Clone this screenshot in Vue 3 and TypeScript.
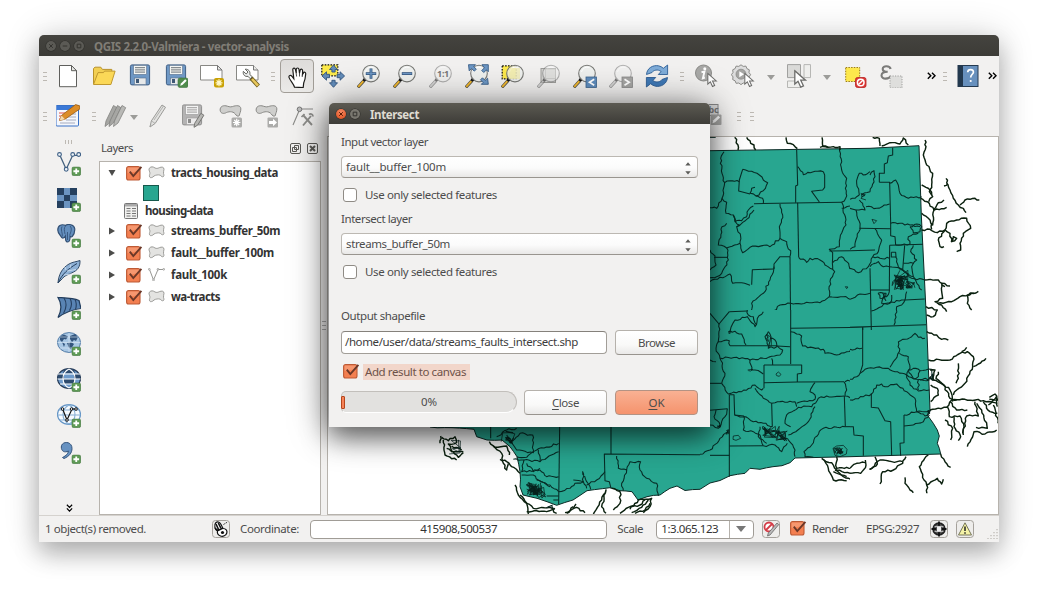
<script setup lang="ts">
interface Tool { icon?: string; kind: 'tool' | 'grip' | 'menu' | 'more' | 'gap'; w: number; on?: boolean; text?: string }
const t = (icon: string, w = 36, on = false, text = ''): Tool => ({ icon, kind: 'tool', w, on, text })
const s = (kind: Tool['kind'], w: number): Tool => ({ kind, w })

const mainTools: Tool[] = [
  s('grip', 11), t('new'), t('open'), t('save'), t('saveas'), t('composer'), t('manager'), s('grip', 14),
  t('hand', 34, true), s('gap', 1), t('pansel'), t('zoomin'), t('zoomout'), t('zoomone', 36, false, '1:1'), t('zoomfull'), t('zoomsel'),
  t('zoomlayer'), t('zoomlast'), t('zoomnext'), t('refresh'), s('grip', 14), t('identify'), t('action'),
  s('menu', 20), t('select'), s('menu', 20), t('deselect'), t('epsilon'), s('gap', 10), s('more', 24),
  s('grip', 4), s('gap', 3), t('help'), s('gap', 1), s('more', 10),
]
const editTools: Tool[] = [
  s('grip', 11), t('editor'), s('grip', 16), t('pencils', 26), s('menu', 12), t('pencil', 36), t('saveedit'),
  s('gap', 1), t('addfeat'), t('movefeat'), t('node'), s('gap', 375), t('label', 36, false, 'abc'), s('grip', 14), s('grip', 12),
]
const sideTools = ['addvector', 'addraster', 'addpg', 'addlite', 'addms', 'addwms', 'addwcs', 'addwfs', 'addcsv']

const layers = [
  { name: 'streams_buffer_50m', w: 109, icon: 'poly' },
  { name: 'fault__buffer_100m', w: 103, icon: 'poly' },
  { name: 'fault_100k', w: 56, icon: 'line' },
  { name: 'wa-tracts', w: 49, icon: 'poly' },
]

// Spreads letters so that a label takes a fixed advance width.
const vFit = {
  mounted(el: HTMLElement, b: { value: number }) {
    const n = (el.textContent || '').length
    el.style.letterSpacing = (b.value - el.getBoundingClientRect().width) / n + 'px'
  },
}

let seed = 7
const rnd = () => { seed = (seed * 16807) % 2147483647; return seed / 2147483647 - 0.5 }
const parse = (p: string) => p.trim().split(/\s+/).map(q => q.split(',').map(Number))
// Gives a polyline the small irregularities of a surveyed river or tract boundary.
function wiggle(p: string, amp = 6): string {
  const pts = parse(p)
  const out: number[][] = [pts[0]]
  for (let i = 1; i < pts.length; i++) {
    const [x0, y0] = pts[i - 1]
    const [x1, y1] = pts[i]
    const len = Math.hypot(x1 - x0, y1 - y0)
    const n = Math.max(1, Math.round(len / 8))
    for (let k = 1; k < n; k++) {
      const d = rnd() * amp
      out.push([x0 + ((x1 - x0) * k) / n - ((y1 - y0) / len) * d, y0 + ((y1 - y0) * k) / n + ((x1 - x0) / len) * d])
    }
    out.push([x1, y1])
  }
  return out.map(q => q[0].toFixed(1) + ',' + q[1].toFixed(1)).join(' ')
}
function town(cx: number, cy: number, rx: number, ry: number, n: number): string {
  const out: string[] = []
  for (let i = 0; i < n; i++) out.push((cx + rnd() * 2 * rx).toFixed(1) + ',' + (cy + rnd() * 2 * ry).toFixed(1))
  return out.join(' ')
}

// A map sheet: its origin, its clip box (x, y, width, height in sheet units) and its linework.
interface Sheet { x: number; y: number; clip: number[]; straight: string[]; bends: string[]; streams: string[]; towns: string[] }
const raw: Sheet[] = [
  {
    x: 700, y: 130, clip: [0, 0, 450, 540],
    straight: ['290,60 293,165 287,168 287,218', '293,218 296,382', '162,221 425,217', '388,363 510,362', '270,380 272,600',
      '155,464 157,419 221,417', '222,417 222,402 240,380 270,380',
      '370,125 374,135 374,172 368,180 335,184 358,216', '128,118 118,150 116,183 150,192', '42,382 82,382', '0,22 47,22'],
    bends: ['72,65 62,85 66,130 74,158 66,205 50,235 30,233', '74,158 90,152 118,155', '128,118 155,124 178,135 190,150 203,158 190,182 168,198 150,190 155,175 165,172',
      '66,205 80,217 78,250 100,255 105,275 125,272 140,260 145,240 160,228', '168,198 188,205 190,220', '100,255 108,278 118,285 110,290 122,320 120,340 80,354 55,345 66,290 80,280',
      '110,290 140,268 162,240', '120,340 128,368 150,352 192,346 210,350 240,325 260,335 272,370 270,380', '240,222 248,255 238,290 240,325',
      '80,354 85,390 65,430 50,440 30,443', '30,455 90,432 98,460 125,458 150,466', '222,410 210,450 190,490 155,520 154,543',
      '154,543 180,556 192,545 215,548 240,525 272,520 360,518 388,500 430,500 450,508', '30,360 45,378 48,405 30,420', '293,110 310,134 345,124 370,125',
      '418,55 425,120 440,145 437,205 425,217 438,285 420,325 418,350 388,358 398,368 398,418', '425,235 450,228',
      '296,382 320,397 330,385 360,390 375,405 398,418 404,425 390,455 388,500', '398,398 425,380 440,395 455,420'],
    streams: ['104,22 114,45 114,60', '140,22 152,40 162,45 167,60', '258,22 262,40 280,44 292,56', '366,22 368,48 400,50 420,50 420,60', '360,52 385,52'],
    towns: ['436,470 444,471 440,476 436,470'],
  },
  {
    x: 850, y: 130, clip: [0, 0, 445, 600],
    straight: ['88,157 119,157 122,280 122,317 135,320 137,345', '119,346 219,343', '119,346 118,485', '60,415 64,600', '0,362 75,360',
      '128,53 128,75 115,78 112,98 103,102 103,130 88,130 88,157', '124,367 137,367 138,381 124,381 124,367', '60,480 118,480', '165,510 224,507',
      '0,592 228,584', '38,592 38,600', '28,295 122,296', '164,346 158,420'],
    bends: ['0,235 18,240 45,240 38,220 28,210', '28,195 20,160 28,130 40,135 60,125', '28,195 15,205 0,208', '60,135 72,122 75,140 60,185 35,195',
      '48,230 80,235 119,222', '18,240 30,290 15,350 0,358', '75,296 95,330 85,365 68,380 55,410 25,428 0,415', '68,380 90,385 118,385',
      '119,160 137,150 150,190 175,205 215,200', '122,280 150,280 180,285 210,290', '180,290 200,282 215,290 210,305 190,308 180,290', '137,345 180,342 175,320 205,310',
      '190,346 182,365 200,390 185,410 190,440', '0,508 30,492 60,490', '64,543 110,520 155,510 165,510', '165,510 155,525 140,530 132,585', '60,410 85,395 100,410 118,410',
      '84,490 108,490 95,520 120,520 125,495', '137,380 145,410 158,420', '118,485 110,500 90,505 84,490', '160,400 190,400', '155,420 190,440 215,480', '170,485 165,510', '118,410 150,415 185,445 225,450'],
    streams: ['68,22 88,25 90,48', '95,48 120,38 150,42 160,24 175,45', '225,30 228,50 220,75 230,105 248,130 245,165 238,185 248,200 236,215', '215,165 240,180 245,195',
      '212,205 238,220 252,240 290,232', '252,240 248,285 235,265 215,250', '250,240 265,218 282,210', '288,145 294,165 300,180 310,205 325,225 340,235 348,248', '330,225 345,210 375,205 388,210', '282,168 294,162',
      '215,300 240,298 262,308 285,300 290,280 320,270 350,265 362,295 340,310 330,340 332,360 320,365', '285,300 265,330 270,350 282,350', '285,300 300,310 305,335 320,325 310,320 303,335', '245,280 245,298',
      '225,450 265,450 275,460 300,468', '275,460 278,505 255,515 275,525 290,545', '275,465 285,470', '262,520 305,515 330,500 385,484', '372,490 352,495 352,520 365,540', '228,530 262,540 250,560 230,555'],
    towns: [town(148, 460, 15, 23, 48), town(183, 464, 15, 11, 20), town(150, 445, 30, 26, 18), town(100, 500, 14, 14, 6), '66,268 80,272 72,281 66,268', '32,190 46,194 36,201 34,192', '36,192 44,197 38,198 33,205 48,210'],
  },
  {
    x: 700, y: 310, clip: [0, 0, 450, 600],
    straight: ['272,0 272,162', '272,55 486,52', '192,165 305,165 305,190 292,192 292,216', '192,165 192,235', '192,218 292,216 432,215', '88,254 88,500', '88,254 102,254 104,315 132,318',
      '30,220 64,220', '30,436 88,436', '88,408 190,407', '433,258 436,350', '30,301 82,296', '90,107 232,107', '436,350 462,350', '232,108 270,110', '215,280 217,350', '88,5 142,3', '30,10 57,42 88,5'],
    bends: ['57,42 55,95 88,92 90,107', '55,95 48,115 60,145 75,190 65,220 85,252 125,245 165,225 185,240 190,235', '60,145 110,142 150,150 190,145 240,135 248,120 232,108', '88,68 105,30 142,20 165,50 172,25 190,5',
      '90,62 125,72 138,105', '142,0 145,15 160,20 170,45', '205,65 195,80 205,115 230,110 225,90 210,85', '205,65 213,80 208,110', '272,65 290,72 305,78 308,108 370,118 375,130 410,135 440,125 486,115', '150,150 155,180 165,180 190,192',
      '215,145 218,165', '165,235 190,265 215,280 225,278 285,275 290,290', '290,280 345,268 345,255 330,245 345,218', '432,215 440,240 435,258 470,270', '435,215 460,210',
      '272,350 255,340 260,315 295,292 335,290 355,265 380,258 433,258',
      '345,290 325,335 300,355 265,375', '436,350 370,355 345,382 335,405 312,425 315,440 340,442', '104,315 145,325 160,335 190,340 217,350', '132,318 130,360 160,365 180,375 190,407', '30,345 55,355 65,335 75,320 82,296', '0,433 30,420 60,385 85,365', '190,407 225,405 245,425 262,400', '262,385 285,420 285,440', '30,150 48,155', '48,300 42,320 60,345 52,352', '180,350 175,380 200,400'],
    streams: ['365,445 378,460 385,475 400,510 440,512', '372,450 395,458 410,480 450,490', '410,440 410,475 440,472 455,475', '405,480 430,500 460,508', '400,485 440,500'],
    towns: [town(212, 366, 28, 18, 30), town(240, 377, 22, 16, 32), town(416, 424, 15, 11, 20), '399,415 410,408 430,406 441,418 439,432 420,440 405,436 399,415', '100,378 115,376 122,385 108,391 99,388 100,378', '228,192 235,186 243,193 238,199 230,197 228,192', town(55, 350, 8, 6, 8), town(82, 366, 4, 8, 8), town(206, 92, 9, 20, 7), '143,180 158,178 152,183 145,182', '84,65 92,64 90,71 84,68'],
  },
  {
    x: 850, y: 310, clip: [0, 50, 445, 500],
    straight: ['38,52 38,165 30,190', '0,52 228,44', '64,250 64,292 85,294 105,332 122,335 125,437', '162,315 162,398 150,400 152,437', '0,350 10,350 12,375 40,378 40,437', '162,348 190,345'],
    bends: ['30,190 45,178 80,172 115,175 135,185 170,195 200,208 238,210', '145,95 165,88 185,80 195,70 205,82 225,85', '145,95 148,125 130,155 120,172', '148,130 175,140 180,175 170,195', '0,270 40,260 65,252 80,225 95,222 105,230 140,222 170,245 195,265 200,305', '170,195 180,225 205,243 238,240',
      '175,180 190,175 210,182 205,200 190,205 175,180', '210,182 245,178 250,205 210,210', '200,305 238,303', '162,315 200,305 225,318 240,308', '190,345 220,335 225,325 238,315', '0,118 36,115', '0,208 20,200 30,190', '205,210 205,240'],
    streams: ['230,65 260,75 275,88 295,90', '235,150 300,150 330,130 352,125 370,140 368,170 345,220 320,240 310,255', '370,170 385,162 408,145', '335,125 350,112', '325,160 325,205 318,220', '240,180 255,180 250,210 240,200', '250,210 280,225 300,265 320,270', '242,225 262,235 265,255 242,275', '265,185 258,205 300,240 308,275',
      '240,300 290,292 305,270 345,268 400,272 442,280', '300,275 320,300 352,300', '375,275 385,318 350,318 338,370', '380,280 395,300 412,355 378,352', '400,275 420,305 442,310', '415,285 440,260 442,290', '352,410 372,365 405,372 440,360', '292,290 298,320 330,318 342,350 340,375', '285,330 308,355 302,390', '312,320 312,350 332,380 325,392', '418,262 435,252 444,270 418,268',
      '235,435 208,470 222,510 230,525 235,580 230,595', '230,525 262,505 275,522 280,508', '165,502 165,520 180,540 190,548', '272,432 285,455 302,472', '168,440 158,460 130,480 98,485 90,522', '58,478 82,462 75,440', '60,478 90,450 125,455 158,455', '430,285 444,340', '0,490 32,490 48,465 46,450', '0,475 20,460 45,458'],
    towns: [town(244, 200, 8, 12, 12), town(238, 306, 4, 6, 10)],
  },
  {
    x: 320, y: 420, clip: [0, 0, 1140, 300],
    straight: ['719,20 716,252', '873,20 873,102', '1200,106 1130,104 853,102 855,182 868,185', '868,185 873,205', '512,20 512,55', '700,240 716,240', '680,228 716,228'],
    bends: ['560,45 580,75 590,90 640,98 638,45 600,40', '590,110 620,112 650,90 716,70', '580,118 612,120 660,125 716,95', '612,120 605,155 660,150 680,170 716,170', '620,130 640,155 660,145', '605,165 640,165 655,180 690,195 716,215', '716,215 750,205 765,190 790,185', '800,195 830,180 855,155', '760,180 790,185 788,155 800,185 812,208', '790,185 800,205', '890,108 895,145 920,150 930,125 962,125 960,150 980,175 1010,190 1015,228', '920,150 905,190 910,212', '650,180 690,200', '655,90 660,125', '530,50 560,30 590,25', '600,40 570,70'],
    streams: ['362,48 360,70', '370,60 375,105 410,120', '365,52 385,62 405,50 410,68 385,72 395,95 430,95', '380,85 400,95 415,112 430,98', '395,78 425,90', '508,65 525,82 560,78 568,105', '520,78 545,100 550,130 560,150 565,130', '540,118 560,125 575,140 600,160', '585,195 595,225 620,250 625,282', '600,225 640,265 690,262 710,280', '620,275 680,275 705,265',
      '820,282 845,240 858,210 845,260 858,280', '760,260 740,280', '735,278 770,262 795,278', '875,205 900,215 900,250 880,270', '930,268 955,240 995,235 990,260 970,278', '900,280 925,262 960,255 975,240', '935,278 965,262 985,240', '945,280 975,270 990,250', '760,265 768,252'],
    towns: [town(640, 208, 22, 22, 55), town(650, 215, 38, 20, 16), town(568, 58, 13, 13, 20), town(570, 50, 28, 22, 6), town(405, 85, 18, 26, 8), town(690, 262, 16, 8, 6)],
  },
]
const sheets = raw.map(r => ({
  ...r,
  bends: r.bends.map(b => wiggle(b, 6)),
  streams: r.streams.map(b => wiggle(b, 6)),
}))
const coast = wiggle('795,458 790,462.7 782,465.7 773,466.7 760,469.3 750,468.3 745,473.3 730,475.7 720,480.5 710,483 700,489.3 685,490.5 677,486 670,488.3 660,495 647,496.7 638,500 632,491.7 620,490.7 610,487.7 587,490.7 573,500 556.7,505.3 547,501.7 537,498.3 523,495 520,486.7 520,471.7 517,456.7 510,446.7 502,440 487,440 476.7,436.7 474,429.3 430,427', 1)
const stateOutline = '430,300 710,150.7 870,148.3 919,145.7 921.3,215 926.7,325 930,410 927.3,415 933.3,423.3 937.3,430 939.3,436 937.3,443.3 939.3,448.3 940.7,454 850,456.7 ' + coast
</script>

<template>
  <svg class="defs" width="0" height="0">
    <symbol id="plus" viewBox="0 0 10 10"><rect x=".4" y=".4" width="9.2" height="9.2" rx="2" fill="#5e9a55" stroke="#497c45" stroke-width=".8" /><path d="M5 2v6M2 5h6" stroke="#fff" stroke-width="1.9" /></symbol>
    <symbol id="lens" viewBox="0 0 24 24"><path d="M.8 23.4 7 16.6" stroke="#55544c" stroke-width="3.2" /><path d="M1.2 22.8 6.4 17.2" class="handle" stroke-width="1.8" /><circle cx="7.6" cy="15.8" r="1.7" class="knot" /><circle cx="14" cy="9.6" r="8.3" fill="#edf0ef" fill-opacity=".75" stroke="#777874" stroke-width="1.1" /><path d="M8.5 8a6 6 0 0 1 8-4.5" stroke="#fff" fill="none" /></symbol>
    <symbol id="disk" viewBox="0 0 24 24"><rect x="2.4" y=".9" width="19.2" height="20" rx="1.6" fill="#6f98c5" stroke="#3f5f86" /><rect x="5.6" y="1.4" width="13" height="9" fill="#f4f5f2" stroke="#59708c" stroke-width=".6" /><path d="M7 3.7h10M7 5.9h10M7 8.1h10" stroke="#5c6469" stroke-width=".9" /><rect x="6.4" y="14" width="11.6" height="6.6" fill="#e7e9ea" stroke="#59708c" stroke-width=".6" /><path d="M8 15h3v4H8z" fill="#3e5876" /></symbol>
    <symbol id="i-new" viewBox="0 0 24 24"><path d="M3.5 1.5h12l5 5.2v16H3.5z" fill="#fff" stroke="#5f5f5c" /><path d="M15.5 1.5v5.2h5z" fill="#e8e8e5" stroke="#5f5f5c" /></symbol>
    <symbol id="i-open" viewBox="0 0 24 24"><path d="M1.5 20V4.5L3 3.2h5.8l1.6 2.2h9.4V9" fill="#f2cf53" stroke="#b9922b" /><path d="M1.5 20.5 6 8.6h5.5l1-1.5h10.6l-4.2 13.4z" fill="#fbd857" stroke="#bf982f" /></symbol>
    <symbol id="i-save" viewBox="0 0 24 24"><use href="#disk" width="24" height="24" /></symbol>
    <symbol id="i-saveas" viewBox="0 0 24 24"><use href="#disk" width="24" height="24" /><rect x="14" y="14" width="10" height="9.6" rx="2" fill="#4f8c4c" stroke="#3e7340" stroke-width=".6" /><path d="m16.2 21.8.7-2.4 4.3-4.1 1.5 1.5-4.3 4.2z" fill="#fff" /></symbol>
    <symbol id="i-composer" viewBox="0 0 24 24"><path d="M.5 1.5h17l4.5 4.5v10H.5z" fill="#fff" stroke="#888884" /><path d="M17.5 1.500v4.500h4.500z" fill="#e8e8e5" stroke="#777" /><rect x="14" y="14" width="10" height="9.600" rx="2" fill="#c9a206" /><path d="M19 15.300v7M15.500 18.800h7M16.600 16.400l4.800 4.800M21.400 16.400l-4.800 4.800" stroke="#fff8c9" stroke-width="1.300" /></symbol>
    <symbol id="i-manager" viewBox="0 0 24 24"><path d="M.5 1.500h17l4.500 4.500v10H.5z" fill="#fff" stroke="#888884" /><path d="M17.500 1.500v4.500h4.500" fill="#e8e8e5" stroke="#777" /><path d="m15 14 7.400 8" stroke="#6e5d1c" stroke-width="4.200" /><path d="m16 15 6 6.600" stroke="#e8c75c" stroke-width="2.600" /><path d="M9.200 5.200 12 8l-1.800 2-2.900-2.600c-.6 3.600 1.900 5.600 4.700 4.900l2.300 2.500 2-2-2.500-2.300c.8-3.200-1.600-5.600-4.600-5.300z" fill="#eceeed" stroke="#53554f" stroke-width=".9" /></symbol>
    <symbol id="i-hand" viewBox="0 0 24 24"><path d="M9.500 23.200c-.6-3.300-4.300-6.500-5.400-9.600-.7-2.300 1.500-3 2.900-1.300l1.800 2.300-1-8.800c-.1-2 2.100-2.300 2.600-.4l.9 4-.1-3.900c.1-2 2.600-2 2.800 0l.5 3.600.6-2.800c.4-1.800 2.500-1.400 2.500.4l-.1 3.600.9-1.200c.6-1.600 2.500-1 2.300.9-.2 2.900-.6 6-2 9l-.5 4.600z" fill="#fff" stroke="#1d1d1b" stroke-width="1.200" /><path d="m11.200 9.500.4 3M14.500 9v3.500M17.500 10l-.3 3" stroke="#222" stroke-width=".8" /></symbol>
    <symbol id="i-pansel" viewBox="0 0 24 24"><rect x=".8" y=".8" width="16" height="11" fill="#fdea4b" stroke="#111" stroke-dasharray="1.600 1.300" stroke-width="1.200" /><path d="m12.500 1 4 4.500h-2.400V8h-3.200V5.500H8.500zM12.500 23.300l4-4.500h-2.400v-2.500h-3.200v2.500H8.500zM1 12l4.500-4.200v2.500h3v3.400h-3v2.500zM23.600 12l-4.500-4.200v2.500h-3v3.400h3v2.500z" fill="#638cb9" stroke="#33567f" stroke-width=".9" /></symbol>
    <symbol id="i-zoomin" viewBox="0 0 24 24"><use href="#lens" width="24" height="24" /><path d="M14 4.400v10.400M8.800 9.600h10.400" stroke="#33567f" stroke-width="2.800" /><path d="M14 5v9.200M9.400 9.600h9.200" stroke="#6d97c4" stroke-width="1.300" /></symbol>
    <symbol id="i-zoomout" viewBox="0 0 24 24"><use href="#lens" width="24" height="24" /><path d="M8.800 9.600h10.400" stroke="#33567f" stroke-width="2.800" /><path d="M9.400 9.600h9.200" stroke="#6d97c4" stroke-width="1.300" /></symbol>
    <symbol id="i-zoomone" viewBox="0 0 24 24"><use href="#lens" width="24" height="24" class="mute" /></symbol>
    <symbol id="i-zoomfull" viewBox="0 0 24 24"><use href="#lens" width="24" height="24" /><path d="M3.500.7h7L8.700 2.500l2.600 2.700-2 2-2.700-2.700-2.400 2.300zM23.300.7v7l-1.800-1.800-2.800 2.600-2-2 2.700-2.700L17 .7zM23.300 20.300h-7l1.800-1.800-2.600-2.700 2-2 2.700 2.700 2.400-2.300z" fill="#6d97c4" stroke="#3a5f89" stroke-width=".9" /></symbol>
    <symbol id="i-zoomsel" viewBox="0 0 24 24"><rect x="1.200" y="1.800" width="14" height="13" fill="#fdea4b" stroke="#111" stroke-width="1.200" stroke-dasharray="1.600 1.300" /><use href="#lens" width="24" height="24" /><path d="M8 4h11v11H8z" fill="#f3eda5" opacity=".6" /></symbol>
    <symbol id="i-zoomlayer" viewBox="0 0 24 24"><rect x="4" y="4.500" width="14.500" height="14" fill="#d5d5d3" stroke="#9d9d9a" /><use href="#lens" width="24" height="24" class="mute" /><rect x="8.500" y="5" width="10" height="9.500" fill="#e0e0de" stroke="#c5c5c3" stroke-width=".7" /></symbol>
    <symbol id="i-zoomlast" viewBox="0 0 24 24"><use href="#lens" width="24" height="24" /><rect x="13" y="13" width="10.500" height="10.500" fill="#5f8dbd" stroke="#3c638d" stroke-width=".8" /><path d="m21.200 15.300-4.700 2.900 4.700 3" fill="none" stroke="#fff" stroke-width="1.700" /></symbol>
    <symbol id="i-zoomnext" viewBox="0 0 24 24"><use href="#lens" width="24" height="24" class="mute" /><rect x="13" y="13" width="10.500" height="10.500" fill="#a6a6a4" stroke="#888" stroke-width=".8" /><path d="m15.500 15.300 4.700 2.900-4.700 3" fill="none" stroke="#fff" stroke-width="1.700" /></symbol>
    <symbol id="i-refresh" viewBox="0 0 24 24"><path d="M1.500 10.500C2 4 8 .8 13.500 1.800c2 .4 3.500 1.200 4.800 2.500L22.600 1v9.500h-9.300l2.800-3C12.800 5 8.500 6 7 8.500z" fill="#7fadd9" stroke="#2f6199" stroke-width=".9" /><path d="M22.500 13.500c-.5 6.500-6.500 9.700-12 8.700-2-.4-3.500-1.200-4.800-2.500L1.400 23v-9.500h9.300l-2.800 3c3.300 2.500 7.600 1.500 9.100-1z" fill="#3f79b6" stroke="#2d5b91" stroke-width=".9" /></symbol>
    <symbol id="cursor" viewBox="0 0 12 16"><path d="M1 1v11.300l2.700-2.400 2.300 5 2.300-1.100L6 9h4z" fill="#fff" stroke="#6d6d6b" stroke-width="1.100" /></symbol>
    <symbol id="i-identify" viewBox="0 0 24 24"><circle cx="8.500" cy="9" r="8" fill="#a8a8a6" stroke="#8c8c89" /><circle cx="9.800" cy="4.800" r="1.500" fill="#fff" /><path d="m6.500 8.200 3-.7-1.600 6.700 2-.7" fill="none" stroke="#fff" stroke-width="1.900" /><use href="#cursor" x="11.500" y="8.500" width="12" height="15" /></symbol>
    <symbol id="i-action" viewBox="0 0 24 24"><path d="m10 .8 2.200 1.600 2.700-.3 1 2.500 2.400 1.200-.3 2.700 1.600 2.200-1.600 2.200.3 2.700-2.400 1.200-1 2.500-2.700-.3-2.200 1.600-2.200-1.600-2.700.3-1-2.500-2.400-1.200.3-2.700L.4 10.700 2 8.500l-.3-2.700 2.400-1.200 1-2.500 2.700.3z" fill="#ddd" stroke="#8b8b88" /><circle cx="10" cy="10.200" r="5" fill="#a5a5a3" stroke="#858583" stroke-width=".7" /><path d="M8.300 7.200v6l4.700-3z" fill="#fff" /><use href="#cursor" x="12.500" y="8.500" width="12" height="15" /></symbol>
    <symbol id="i-select" viewBox="0 0 24 24"><path d="M.5.600h13v13H.5z" fill="#dadad8" stroke="#a1a19f" /><path d="M17 .6h6.500v13H17zM.5 17h13v6.500H.5z" fill="#efefed" stroke="#b7b7b4" /><use href="#cursor" x="6" y="5.500" width="15.500" height="19" /></symbol>
    <symbol id="i-deselect" viewBox="0 0 24 24"><rect x="2.700" y="3.500" width="14" height="14" fill="#fde84c" stroke="#9b7d16" stroke-dasharray="1.500 1.200" /><rect x="12.500" y="13.500" width="10.500" height="10" rx="2" fill="#dd3a38" stroke="#b62120" stroke-width=".8" /><circle cx="17.700" cy="18.500" r="3.300" fill="none" stroke="#fff" stroke-width="1.500" /><path d="m15.500 20.600 4.400-4.300" stroke="#fff" stroke-width="1.400" /></symbol>
    <symbol id="i-epsilon" viewBox="0 0 24 24"><path d="M11.600 5C11 1.700 3.700 1 3.700 4.900c0 2.400 2.500 2.800 5 2.800-3.500 0-6.200.9-6.200 3.900 0 4.200 8 3.700 9.200.3" fill="none" stroke="#7b7b79" stroke-width="2.100" /><rect x="11" y="12" width="12" height="12" fill="#dededc" stroke="#9e9e9c" stroke-dasharray="1.200 1.300" /></symbol>
    <symbol id="i-help" viewBox="0 0 24 24"><rect x="2" y="1.500" width="20" height="21" fill="#6790bd" stroke="#24394f" /><path d="M2 1.500h5v21H2z" fill="#22384e" /><path d="M11.700 8.200c.2-3.700 6-3.400 5.700 0-.2 2-2.600 2.300-2.700 5.300" fill="none" stroke="#fff" stroke-width="1.700" /><circle cx="14.700" cy="17" r="1.100" fill="#fff" /></symbol>
    <symbol id="i-editor" viewBox="0 0 24 24"><rect x="0" y="1.500" width="22.500" height="20.500" rx="1" fill="#f5f7fc" stroke="#3971c7" /><path d="M.5 2h21.500v4H.5z" fill="#3b79d7" /><path d="M3 9h6M3 12h5M3 15h4" stroke="#e35143" stroke-width="1.100" /><path d="M12 10h8M12 13h8M10 16h10M4 19h15" stroke="#a5abbd" stroke-width="1.100" /><path d="m3.500 16.500 2-5L19.500.6l4.200 1.200.3 3L9 15.200z" fill="#dc8d27" stroke="#9a5b10" stroke-width=".8" /><path d="m5.500 11.500 3.500 3.700-5.500 1.300z" fill="#f3d8ad" /></symbol>
    <symbol id="i-pencils" viewBox="0 0 24 24"><g fill="#a6a6a3" stroke="#82827f" stroke-width=".8"><path d="m2 22.500 1-5.500L10.500 1.500l3.500 2.200L6.500 19z" /><path d="m6 22.500 1-5.500L14.500 1.500l3.500 2.200L10.500 19z" /><path d="m10.500 22.500 1-5.500L19 1.500l3.700 2.200L15 19z" fill="#b9b9b6" /></g></symbol>
    <symbol id="i-pencil" viewBox="0 0 24 24"><path d="m4 23 1.300-6L16 1l3.500 2.300L9.200 19.400z" fill="#e3e3e1" stroke="#9a9a97" /><path d="m5.500 17 3.500 2.300M8 16 17.500 2M4 23l.7-2.500" stroke="#a5a5a2" stroke-width=".8" fill="none" /></symbol>
    <symbol id="i-saveedit" viewBox="0 0 24 24"><g class="grey"><use href="#disk" x="-2" width="24" height="24" /></g><path d="m12 23.300.7-4 6.200-10 3 1.900-6.400 10z" fill="#b7b7b4" stroke="#777774" /></symbol>
    <symbol id="blob" viewBox="0 0 24 14"><path d="M1.200 6C1 2.800 3.700.9 7.300 1.600c2.500.5 4 1.600 6.700.8C17.700 1 22.800.7 22.800 4.800c0 3-1.300 4.500-1.600 7-1.700 1.400-3.200 0-4.200-1.700-2.700-3.400-7.600-2.500-10.200-1C3.500 10.300 1.300 8.700 1.200 6z" fill="#cfcfcd" stroke="#858582" /></symbol>
    <symbol id="i-addfeat" viewBox="0 0 24 24"><use href="#blob" width="23" height="14" /><rect x="12.500" y="13.500" width="10.500" height="10" rx="1.500" fill="#acacaa" /><path d="M17.700 14.700v7.600M14 18.500h7.400M15.200 16l5 5M20.200 16l-5 5" stroke="#fff" stroke-width="1.200" /></symbol>
    <symbol id="i-movefeat" viewBox="0 0 24 24"><use href="#blob" width="23" height="14" /><rect x="12.500" y="13.500" width="10.500" height="10" rx="1" fill="#acacaa" /><path d="M14 17h4v-2.200l4 3.700-4 3.700V20h-4z" fill="#fff" /></symbol>
    <symbol id="i-node" viewBox="0 0 24 24"><path d="M2 21 8 7M9 5h13" stroke="#8a8a87" stroke-width="1.100" /><circle cx="8.500" cy="5.300" r="2.300" fill="#bbb" stroke="#777" /><path d="m12 11 9 10M20 12l-8 9.500" stroke="#8d8d8a" stroke-width="1.900" /><path d="M18 10.500c2-1.500 4 0 4 2M10.500 13l3-3" stroke="#8d8d8a" stroke-width="1.700" fill="none" /></symbol>
    <symbol id="i-label" viewBox="0 0 24 24"><rect x="-3" y=".5" width="19" height="11" fill="#ddd" stroke="#888" /><rect x="8.500" y="10.500" width="11" height="10.500" rx="1" fill="#a9a9a7" /><path d="m10.500 19.300.8-3 5-4.500 1.800 1.800-5 4.700z" fill="#fff" /></symbol>

    <symbol id="i-addvector" viewBox="0 0 24 24"><path d="M3 3.500 9.200 17.300l6.500-14h6" fill="none" stroke="#44617e" stroke-width="1.300" /><g fill="#eef3f7" stroke="#3f6086" stroke-width="1.100"><circle cx="2.500" cy="2.500" r="1.900" /><circle cx="9.200" cy="17.300" r="1.900" /><circle cx="15.700" cy="2.500" r="1.900" /><circle cx="21.700" cy="2.500" r="1.900" /></g></symbol>
    <symbol id="i-addraster" viewBox="0 0 24 24"><path d="M0 0h20v20H0z" fill="#6b94c1" /><path d="M0 0h7v7H0zM13 0h7v7h-7zM7 7h6v6H7zM0 13h7v7H0zM13 13h7v7h-7z" fill="#25405f" /></symbol>
    <symbol id="i-addpg" viewBox="0 0 24 24"><path d="M.8 6C.8.800 5 0 8.500 1.400 11-.2 17 .3 17.700 4.500c.3 3-1.300 6.700-2.500 8-1 .8-1.800 0-2.200-.7.200 3.500-.2 6-2.300 6.200-2.400 0-2.200-3.300-2.200-6-1.800 3-3.800 2.500-4.600.3C2.500 10.500.8 9 .8 6z" fill="#648fbe" stroke="#324f73" stroke-width="1.200" /><path d="M5 2.500c-1.800 3 .8 6.500.3 10M8.500 2c-2 2-1 5-.5 8M13 2c2.500 2.500.8 6-.5 9.500M10.500 8v8" fill="none" stroke="#3a5a82" /></symbol>
    <symbol id="i-addlite" viewBox="0 0 24 24"><path d="M1 23C1.500 15 5 8 12 4 16 1.700 19 2 23 .5c.3 6.500-2.500 10-8.500 12.500-4 1.700-7.500 3-9 5.500z" fill="#8eb1d6" stroke="#344d69" /><path d="M1 23C5.500 13.500 11 9 20 3.500" fill="none" stroke="#27415f" /><path d="m7 15 7-1M10 11l9-1.500M9 10l-1-3M13 8l1-3.500" stroke="#d2e1f0" stroke-width=".8" /></symbol>
    <symbol id="i-addms" viewBox="0 0 24 24"><path d="M1 1.500c8 .5 15 .5 21 3l2 8c-6 .7-14 2.500-23 9C5 14 4.500 7 1 1.500z" fill="#5984b4" stroke="#213c5c" stroke-width="1.200" /><path d="M7 2c4 6 2 11-.5 15.500M13 2.500c3 5 1.500 8.500-.5 12M18 3.500c2 3.500 1.500 6.500.5 10" fill="none" stroke="#253f60" stroke-width="1.100" /></symbol>
    <symbol id="i-addwms" viewBox="0 0 24 24"><ellipse cx="12" cy="10.500" rx="11.500" ry="9.900" fill="#a8c7e4" stroke="#537ca7" /><path d="m3 4.500 4-2 4 2-2 3-2-.5-2 3-2-2zM13 4l5-2 3 3-2 4-2-1-2 2-2-3zM10 11l4-1 3 2-3 5-2-1zM5 10l3 2-1 3z" fill="#33557d" /><path d="M.5 10.500h23M12 1v19M3 5h18M3 16h18" fill="none" stroke="#dceaf5" stroke-width=".6" /></symbol>
    <symbol id="i-addwcs" viewBox="0 0 24 24"><ellipse cx="12" cy="10.500" rx="11.500" ry="9.900" fill="#6d9acb" stroke="#263b56" stroke-width="1.200" /><path d="M7 1.800C9 .8 15 .8 17 1.800l1 3.500H6zM1 6h6v5H.7zM17 6h6v5h-6zM7 11h10v5H7z" fill="#2d4b6e" /><path d="M1 6h22M.5 11h23M3 16h18M12 1C4 5 4 16 12 20M12 1c8 4 8 15 0 19" fill="none" stroke="#fff" stroke-width="1.100" /></symbol>
    <symbol id="i-addwfs" viewBox="0 0 24 24"><ellipse cx="12" cy="10.500" rx="11.500" ry="9.900" fill="#f7fbff" stroke="#6495c6" stroke-width="1.200" /><path d="M2 6h20M.5 11h23M3 16h18M12 1C4 5 4 16 12 20M12 1c8 4 8 15 0 19" fill="none" stroke="#85aed4" stroke-width="1.100" /><path d="m6 6 4 10 5-11h4" fill="none" stroke="#111" stroke-width="1.200" /><g fill="#fff" stroke="#111"><circle cx="5.500" cy="5" r="1.300" /><circle cx="10" cy="16" r="1.300" /><circle cx="14.500" cy="5" r="1.300" /><circle cx="19" cy="5" r="1.300" /></g></symbol>
    <symbol id="i-addcsv" viewBox="0 0 24 24"><path d="M5.500 17.500c4-2 5.500-4 6-6.500-4 2-7.200.3-7.200-4C4.300 1 15 .5 15 8.500c0 4.500-3 8-8 10z" fill="#6792c1" stroke="#34547c" /></symbol>

    <symbol id="poly" viewBox="0 0 17 13"><path d="M1.300 2.300C3 .3 5 .5 7 2c1.500.8 3 .3 4.500-.4C13.500.7 16 .9 16 3.300c0 1.500-.8 2.400-.5 4 .3 1.300.8 2.200 0 3.200-1.300.8-2.400-.3-3.200-1.300C10.500 8.500 7.500 9 6 10c-1.300 1.700-3.800 2.300-4.500.8C1 9 2.300 8 1.800 6.300 1.300 4.800.6 3.300 1.300 2.300z" fill="#e3e3e1" stroke="#92928f" stroke-width=".9" /></symbol>
    <symbol id="line" viewBox="0 0 17 13"><path d="m1.500 1.500 4 10.500L10 1.500h5.500" fill="none" stroke="#8a8a86" stroke-width=".9" /><g fill="#fff" stroke="#8a8a86" stroke-width=".7"><circle cx="1.300" cy="1.300" r=".9" /><circle cx="5.500" cy="12" r=".9" /><circle cx="10" cy="1.300" r=".9" /><circle cx="15.700" cy="1.300" r=".9" /></g></symbol>
    <symbol id="check" viewBox="0 0 17 16"><rect x=".6" y="1.600" width="13.400" height="13.400" rx="2" fill="#f37f50" stroke="#bd5a35" stroke-width="1.100" /><path d="M1.600 8V2.600h11.400V6z" fill="#f9a684" opacity=".6" /><path d="m3.800 6.600 3.500 4.500L15.400 1.800" fill="none" stroke="#6b3828" stroke-width="1.900" /></symbol>
    <symbol id="more" viewBox="0 0 9 8"><path d="m.8.8 3 3-3 3M5 .8l3 3-3 3" fill="none" stroke="#000" stroke-width="1.400" /></symbol>
  </svg>

  <main class="window">
    <header class="title">
      <i class="dot"><svg viewBox="0 0 11 11"><path d="m3.500 3.500 4 4M7.500 3.500l-4 4" /></svg></i>
      <i class="dot"><svg viewBox="0 0 11 11"><path d="M3 5.500h5" /></svg></i>
      <i class="dot"><svg viewBox="0 0 11 11"><path d="M3.500 3.500h4v4h-4z" /></svg></i>
      <b v-fit="195">QGIS 2.2.0-Valmiera - vector-analysis</b>
    </header>

    <nav v-for="(bar, b) in [mainTools, editTools]" :key="b" class="bar">
      <div v-for="(x, i) in bar" :key="i" class="cell" :class="[x.kind, { on: x.on }]" :style="{ width: x.w + 'px' }">
        <svg v-if="x.kind === 'tool'" class="ic">
          <use :href="'#i-' + x.icon" width="24" height="24" />
          <text v-if="x.text" :class="'t-' + x.icon" :x="x.icon === 'label' ? 1 : 14" :y="x.icon === 'label' ? 9 : 12.800">{{ x.text }}</text>
        </svg>
        <svg v-else-if="x.kind === 'more'" class="mo"><use href="#more" width="9" height="8" /></svg>
        <i v-else-if="x.kind !== 'gap'" />
      </div>
    </nav>

    <section class="body">
      <nav class="side">
        <i class="sgrip" />
        <div v-for="n in sideTools" :key="n" class="scell">
          <svg class="ic"><use :href="'#i-' + n" width="24" height="24" /><use href="#plus" x="14.500" y="14.500" width="9.500" height="9.500" /></svg>
        </div>
        <svg class="down" viewBox="0 0 8 9"><path d="m1 .8 3 3 3-3M1 5l3 3 3-3" fill="none" stroke="#000" stroke-width="1.400" /></svg>
      </nav>

      <aside class="panel">
        <div class="phead">
          <span v-fit="32">Layers</span>
          <svg width="11" height="11" viewBox="0 0 11 11"><rect x=".5" y=".5" width="10" height="10" rx="1.500" /><path d="M4.500 2.500h4v4h-4zM2.500 4.500h4v4h-4z" /></svg>
          <svg width="11" height="11" viewBox="0 0 11 11"><rect x=".5" y=".5" width="10" height="10" rx="1.500" /><path d="m3 3 5 5M8 3 3 8" stroke-width="2" /></svg>
        </div>
        <div class="tree">
          <div class="row">
            <svg class="tri" viewBox="0 0 8 8"><path d="M.5 1h7L4 7z" /></svg>
            <svg class="ck"><use href="#check" width="17" height="16" /></svg>
            <svg class="ty"><use href="#poly" width="17" height="13" /></svg>
            <b v-fit="107">tracts_housing_data</b>
          </div>
          <div class="row swrow"><i class="swatch" /></div>
          <div class="row table">
            <svg width="15" height="16" viewBox="0 0 15 16"><rect x=".5" y=".5" width="13" height="15" rx="1" fill="#f1f1ef" stroke="#777" /><path d="M1 1h12v2.500H1z" fill="#aaa" /><path d="M2.500 5.500h4M8 5.500h4M2.500 8h4M8 8h4M2.500 10.500h4M8 10.500h4M2.500 13h4M8 13h4" stroke="#777" /></svg>
            <b v-fit="68">housing-data</b>
          </div>
          <div v-for="l in layers" :key="l.name" class="row">
            <svg class="tri" viewBox="0 0 8 8"><path d="M1 .5v7L7 4z" /></svg>
            <svg class="ck"><use href="#check" width="17" height="16" /></svg>
            <svg class="ty"><use :href="'#' + l.icon" width="17" height="13" /></svg>
            <b v-fit="l.w">{{ l.name }}</b>
          </div>
        </div>
      </aside>
      <div class="split"><i /></div>

      <svg class="map" viewBox="328 137 670 377">
        <defs>
          <clipPath v-for="(m, k) in sheets" :id="'sheet' + k" :key="k"><rect :x="m.clip[0]" :y="m.clip[1]" :width="m.clip[2]" :height="m.clip[3]" /></clipPath>
        </defs>
        <polygon :points="stateOutline" class="land" />
        <g v-for="(m, k) in sheets" :key="k" :transform="`translate(${m.x} ${m.y}) scale(.33333)`" :clip-path="`url(#sheet${k})`">
          <polyline v-for="(p, i) in m.straight" :key="'a' + i" :points="p" class="edge" />
          <polyline v-for="(p, i) in m.bends" :key="'b' + i" :points="p" class="edge" />
          <polyline v-for="(p, i) in m.streams" :key="'c' + i" :points="p" class="river" />
          <polyline v-for="(p, i) in m.towns" :key="'d' + i" :points="p" class="town" />
        </g>
      </svg>
    </section>

    <footer class="status">
      <span class="msg"><span v-fit="101">1 object(s) removed.</span></span>
      <svg class="sbtn mouse" viewBox="0 0 18 18"><rect x=".5" y=".5" width="17" height="17" rx="3" /><path d="M4 2.500c2-1.500 4 0 5 2l2 4c3 0 4.500 2 3.800 4.500S11 17 8.500 16 5 13 5.500 11C3 10 1.500 5 4 2.500z" fill="#fff" stroke="#111" stroke-width="1.200" /><path d="m4 4 2.500 5.500M6.300 3l2.500 5M3 8l3 3M6 10.500l5-2.500" stroke="#111" stroke-width="1.600" /><circle cx="10.500" cy="12.500" r="1.600" fill="#111" /><path d="m11.500 4.500 4-2.500" stroke="#222" stroke-dasharray="1.500 1" /></svg>
      <span class="lab coord"><span v-fit="59">Coordinate:</span></span>
      <div class="field pos"><span v-fit="77">415908,500537</span></div>
      <span class="lab scale"><span v-fit="26">Scale</span></span>
      <div class="combo"><div class="val"><span v-fit="57">1:3.065.123</span></div><i /></div>
      <svg class="sbtn stop" viewBox="0 0 18 18"><rect x=".5" y=".5" width="17" height="17" rx="3" /><circle cx="7" cy="7" r="4.500" fill="#fff" stroke="#d43c47" stroke-width="1.800" /><path d="m4 10 6-6" stroke="#d43c47" stroke-width="1.800" /><path d="m5.500 16 .8-3L15 3l1.800 1.500L8 15z" fill="#bbb" stroke="#666" stroke-width=".8" /></svg>
      <svg class="ck rck"><use href="#check" width="17" height="16" /></svg>
      <span class="lab render"><span v-fit="36">Render</span></span>
      <span class="lab epsg"><span v-fit="53">EPSG:2927</span></span>
      <svg class="sbtn crs" viewBox="0 0 18 18"><rect x=".5" y=".5" width="17" height="17" rx="3" /><circle cx="9" cy="9" r="5.800" fill="#666" stroke="#222" stroke-width="1.900" /><path d="M9 1.500v15M1.500 9h15" stroke="#111" stroke-width="1.800" /><path d="M6.500 6h5v6h-5z" fill="#eee" stroke="#333" stroke-width=".7" /><path d="M4.500 6.500h9M4.500 11.500h9" stroke="#ddd" stroke-width=".7" /></svg>
      <svg class="sbtn warn" viewBox="0 0 18 18"><rect x=".5" y=".5" width="17" height="17" rx="3" /><path d="M9 2.800 15.500 15h-13z" fill="#f5f3a6" stroke="#77775a" /><path d="M9 6.500v4.500M9 12.200v1.500" stroke="#222" stroke-width="1.500" /></svg>
      <svg class="corner" viewBox="0 0 12 12"><path d="M10 1v10M7 4v7M4 7v4M1 10v1" stroke="#b9b6b1" stroke-dasharray="1.200 1.800" stroke-width="1.200" /></svg>
    </footer>
  </main>

  <section class="dialog">
    <header class="title dt">
      <i class="dot red"><svg viewBox="0 0 11 11"><path d="m3.500 3.500 4 4M7.500 3.500l-4 4" /></svg></i>
      <i class="dot lit"><svg viewBox="0 0 11 11"><path d="M3.500 3.500h4v4h-4z" /></svg></i>
      <b v-fit="49">Intersect</b>
    </header>
    <div class="form">
      <label class="cap"><span v-fit="87">Input vector layer</span></label>
      <div class="pick"><span v-fit="100">fault__buffer_100m</span><svg viewBox="0 0 6 13"><path d="M.3 3.500 3 .3l2.700 3.200zM.3 9.300 3 12.500l2.700-3.200z" /></svg></div>
      <div class="opt"><i class="box" /><span v-fit="132">Use only selected features</span></div>
      <label class="cap second"><span v-fit="71">Intersect layer</span></label>
      <div class="pick"><span v-fit="104">streams_buffer_50m</span><svg viewBox="0 0 6 13"><path d="M.3 3.500 3 .3l2.700 3.200zM.3 9.300 3 12.500l2.700-3.200z" /></svg></div>
      <div class="opt"><i class="box" /><span v-fit="132">Use only selected features</span></div>
      <label class="cap third"><span v-fit="84">Output shapefile</span></label>
      <div class="line1">
        <div class="path"><span v-fit="233">/home/user/data/streams_faults_intersect.shp</span></div>
        <div class="btn"><span v-fit="37">Browse</span></div>
      </div>
      <div class="opt add"><svg class="ck"><use href="#check" width="17" height="16" /></svg><div class="hl"><span v-fit="101">Add result to canvas</span></div></div>
      <div class="line2">
        <div class="prog"><i /><span v-fit="16">0%</span></div>
        <div class="btn"><span v-fit="27"><u>C</u>lose</span></div>
        <div class="btn ok"><span v-fit="16"><u>O</u>K</span></div>
      </div>
    </div>
  </section>
</template>

<style>
html, body { margin: 0; background: #fff; overflow: hidden; }
#app { height: 592px; position: relative; overflow: hidden; }
</style>

<style scoped>
.defs { position: absolute; }
svg { display: block; flex: none; overflow: visible; }
.handle { stroke: #f4b92c; }
.knot { fill: #111; }
.mute { opacity: .55; filter: grayscale(1); }
.grey { filter: grayscale(1); opacity: .65; }
.t-zoomone { font: bold 9px "Noto Sans", sans-serif; text-anchor: middle; fill: #777; letter-spacing: -.3px; }
.t-label { font: bold 9px "Noto Sans", sans-serif; fill: #777; }
.window {
  position: relative; width: 960px; height: 507px; margin: 35px 0 0 39px; display: flex; flex-direction: column;
  border-radius: 5px 5px 0 0; background: #f2f1f0; color: #4c4c4c; font: 11.5px/16px "Noto Sans", sans-serif; white-space: nowrap;
  box-shadow: 0 0 36px rgba(0, 0, 0, .16), 0 12px 24px rgba(0, 0, 0, .26);
}
b, span { flex: none; }
.title { display: flex; align-items: center; height: 21px; flex: none; padding-left: 7px; border-radius: 5px 5px 0 0; background: linear-gradient(#45443f, #3c3b37); color: #807d76; }
.title b { margin-left: 4px; padding-top: 2px; }
.dot { width: 10px; height: 10px; margin-right: 4px; border-radius: 50%; background: #5b5a55; box-shadow: 0 0 0 .5px #2e2d2a; }
.dot:nth-child(3) { margin-right: 6px; }
.dot svg { width: 10px; height: 10px; fill: none; stroke: #34332f; stroke-width: 1.100; }
.dt { background: linear-gradient(#5c5a52, #3d3c38); color: #dfdbd2; }
.dot.red { background: radial-gradient(circle at 50% 30%, #f58a65, #dd4814); }
.dot.red svg { stroke: #5c1b05; }
.dot.lit { background: #79776f; }
.dt b { margin-left: 6px; }
.bar { display: flex; height: 40px; flex: none; align-items: center; }
.cell { display: flex; align-items: center; justify-content: center; height: 34px; flex: none; }
.on { box-sizing: border-box; border: 1px solid #a29e98; border-radius: 4px; background: linear-gradient(#dedcda, #ebeae8); }
.ic { width: 24px; height: 24px; }
.mo { width: 9px; height: 8px; }
.grip i { width: 4px; height: 9px; background: repeating-linear-gradient(#bdb9b3 0 1px, transparent 1px 4px); }
.menu i { margin-top: 2px; border: 4px solid transparent; border-top: 5px solid #9c9c99; border-bottom: 0; }
.body { display: flex; height: 379px; flex: none; }
.side { width: 60px; display: flex; flex-direction: column; align-items: center; }
.sgrip { width: 8px; height: 4px; margin: 4px 0 4px; background: repeating-linear-gradient(90deg, #bdb9b3 0 1px, transparent 1px 3px); }
.scell { height: 36px; padding-top: 4px; box-sizing: border-box; }
.down { width: 7px; height: 8px; margin-top: 32px; }
.panel { width: 222px; display: flex; flex-direction: column; }
.phead { height: 25px; display: flex; align-items: center; padding: 0 3px 1px 2px; box-sizing: border-box; gap: 6px; }
.phead span { margin-right: auto; }
.phead svg { fill: none; stroke: #5a5955; stroke-width: 1; }
.tree { flex: 1; box-sizing: border-box; border: 1px solid #b7b3ad; background: #fff; color: #333; }
.row { display: flex; align-items: center; height: 22px; padding-left: 8px; }
.tri { width: 8px; height: 8px; fill: #4c4c4a; margin-right: 10px; }
.ck { width: 17px; height: 16px; margin-right: 5px; }
.ty { width: 17px; height: 13px; margin: 0 6px 2px 0; }
.swrow { height: 18px; padding-left: 43px; }
.swatch { width: 14px; height: 14px; border: 1px solid #15594c; background: #28a690; }
.table { height: 18px; padding-left: 24px; gap: 6px; }
.split { width: 6px; display: flex; align-items: center; justify-content: center; }
.split i { width: 4px; height: 9px; background: repeating-linear-gradient(#aaa 0 1px, transparent 1px 4px); }
.map { box-sizing: border-box; width: 672px; height: 379px; border: 1px solid #b7b3ad; background: #fff; overflow: hidden; }
.land { fill: #28a690; stroke: #0b2a25; stroke-width: 1; }
.edge, .river, .town { fill: none; stroke-linejoin: round; }
.edge { stroke: #072c26; stroke-width: 3.200; }
.river { stroke: #0b210f; stroke-width: 4.300; }
.town { stroke: #05201c; stroke-width: 2.200; }
.status { flex: 1; display: flex; align-items: center; border-top: 1px solid #d5d2ce; box-sizing: border-box; }
.msg { width: 167px; padding-left: 6px; }
.sbtn { width: 18px; height: 18px; }
.sbtn rect { fill: #eeedeb; stroke: #a5a19b; }
.coord { flex: none; width: 70px; margin-left: 9px; }
.mouse { margin-right: 1px; }
.field, .combo { box-sizing: border-box; height: 19px; border: 1px solid #a09c96; border-radius: 4px; background: #fff; color: #333; display: flex; align-items: center; }
.pos { width: 298px; justify-content: center; }
.scale { width: 39px; margin-left: 10px; }
.combo { width: 98px; }
.val { width: 73px; padding-left: 4px; box-sizing: border-box; border-right: 1px solid #b5b1ab; height: 17px; display: flex; align-items: center; }
.combo i { margin-left: 6px; border: 5px solid transparent; border-top: 6px solid #777; border-bottom: 0; }
.stop { margin-left: 8px; }
.rck { margin: 0 5px 2px 10px; }
.render { width: 54px; }
.epsg { width: 64px; }
.warn { margin-left: 8px; }
.corner { width: 12px; height: 12px; margin: 10px 0 0 13px; }
.dialog {
  position: absolute; left: 329px; top: 103px; width: 381px; height: 324px; border-radius: 5px 5px 0 0; background: #f2f1f0;
  color: #4c4c4c; font: 11.5px/16px "Noto Sans", sans-serif; white-space: nowrap;
  box-shadow: 0 2px 40px rgba(0, 0, 0, .4), 0 10px 26px rgba(0, 0, 0, .5);
}
.form { padding: 8px 12px 0; }
.cap { display: flex; align-items: center; height: 20px; margin-bottom: 4px; }
.second { margin-top: 3px; }
.third { margin-top: 23px; }
.pick { display: flex; align-items: center; justify-content: space-between; height: 22px; box-sizing: border-box; padding: 0 6px 0 4px; border: 1px solid #bcb8b2; border-bottom-color: #99958f; border-radius: 4px; background: linear-gradient(#fff, #fbfbfb 55%, #e9e8e7); }
.pick svg { width: 6px; height: 13px; fill: #5b5b58; padding-top: 3px; }
.opt { display: flex; align-items: center; height: 22px; margin-top: 6px; padding-left: 2px; }
.box { width: 12px; height: 12px; border: 1px solid #8f8b85; border-radius: 3px; background: #fff; margin-right: 8px; }
.line1, .line2 { display: grid; grid-template-columns: 266px 83px; gap: 8px; height: 25px; }
.path { display: flex; align-items: center; height: 23px; margin-top: .5px; box-sizing: border-box; border: 1px solid #a29e98; border-top-color: #85817b; border-radius: 4px; background: #fff; padding-left: 3px; color: #3c3c3c; }
.btn { display: flex; align-items: center; justify-content: center; height: 25px; box-sizing: border-box; border: 1px solid #b5b1ab; border-bottom-color: #98948e; border-radius: 4px; background: linear-gradient(#fff, #f9f9f8 60%, #eae9e8); }
.ok { background: linear-gradient(#f9b193, #f5936d); border-color: #b39384; }
.add .ck { margin-bottom: 2px; }
.hl { display: flex; align-items: center; height: 16px; padding: 0 4px 0 2px; margin-left: -2px; background: #f2d6ca; color: #6e5249; }
.line2 { grid-template-columns: 183px 91px 83px; gap: 0; margin-top: 7px; }
.line2 .prog { width: 176px; }
.line2 .btn { width: 83px; }
.prog { position: relative; height: 22px; margin-top: 1px; box-sizing: border-box; border: 1px solid #c2bfbb; border-bottom-color: #fff; border-radius: 5px 11px 11px 5px; background: #e2e1df; display: flex; align-items: center; justify-content: center; }
.prog i { position: absolute; left: -1px; top: 4px; width: 2px; height: 11px; border: 1px solid #b5461c; border-radius: 1px; background: #f58258; }
u { text-underline-offset: 2px; }
</style>
